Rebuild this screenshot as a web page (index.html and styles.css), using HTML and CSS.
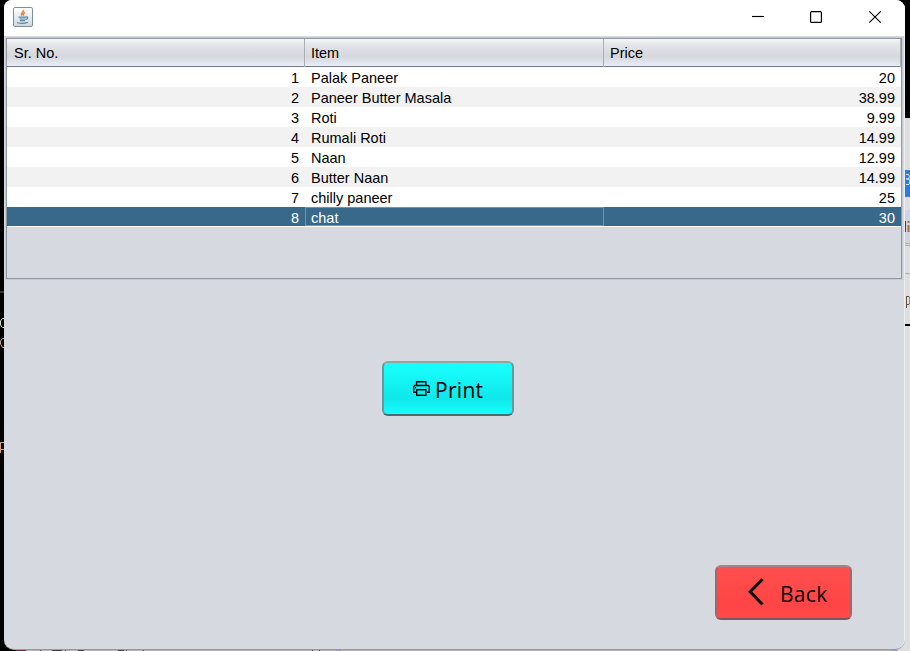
FILE: index.html
```
<!DOCTYPE html>
<html lang="en">
<head>
<meta charset="utf-8">
<title>Menu</title>
<link rel="stylesheet" href="styles.css">
</head>
<body>
<div class="desktop" aria-hidden="true">
  <svg width="910" height="651" viewBox="0 0 910 651">
    <rect width="910" height="651" fill="#000"/>
    <rect x="0" y="291" width="4" height="2" fill="#333"/>
    <g fill="none" stroke-width="1">
      <path d="M4 318.500H2.500L.5 321v4l2 2.500H4" stroke="#cfe3c8"/>
      <path d="M4 338.500H2.500L.5 341v3l2 3.500H4" stroke="#c99a86"/>
      <path d="M.5 442v11M1 442.500h3M1 449.500h3" stroke="#d9a05c"/>
    </g>
    <rect x="890" y="118" width="20" height="533" fill="#dedede"/>
    <rect x="905" y="170" width="5" height="27" fill="#2d7fd6"/>
    <path d="M906 174.500h2.500l1 2-1 2.500H906h3l1 3-1 2.500h-3" fill="none" stroke="#dbe3ec"/>
    <rect x="905" y="210" width="5" height="34" fill="#d0d4dc"/>
    <path d="M905.500 221v11" stroke="#345"/>
    <path d="M908.500 221v2M908.500 225v7" stroke="#a87032" stroke-width="2"/>
    <path d="M905 243.500h5M905 245.500h5M905 273.500h5" stroke="#aaa"/>
    <path d="M906.500 296v12M907 296.500h2l1 1.500v5l-1 1.500h-2" stroke="#6b5240" fill="none"/>
    <rect x="905" y="324" width="5" height="2" fill="#000"/>
    <rect x="14" y="649" width="884" height="2" fill="#b5b5b5"/>
    <rect x="10" y="649" width="6" height="2" fill="#000"/>
    <rect x="16" y="649" width="10" height="2" fill="#7c2644"/>
    <path d="M52 650.500h10M65.500 649v2M40.500 649v2M78 650.500h6M118 650.500h6M126.500 649v2M143.500 649v2M312.500 649v2M319.500 649v2" stroke="#444"/>
    <path d="M336 650h5M892 650h5" stroke="#9999bd" stroke-width="2"/>
  </svg>
</div>

<main class="window">
  <header class="titlebar">
    <svg class="app-icon" width="20" height="20" viewBox="0 0 20 20">
      <defs><linearGradient id="tile" x1="0" y1="0" x2="0" y2="1"><stop offset="0" stop-color="#fff"/><stop offset="1" stop-color="#cfd8df"/></linearGradient></defs>
      <rect x=".5" y=".5" width="19" height="19" rx="1.500" fill="url(#tile)" stroke="#7990a0"/>
      <path d="M10.300 3c1 2-3.300 3-1.500 5.500M12 5.500c-2 1-2.500 1.700-1.200 3.300" fill="none" stroke="#ef8743" stroke-width="1.700"/>
      <path d="M5.500 10.200h7.500M6.500 12h6M7 13.600h5M13 10c2.500-.6 2.200 2-.5 2.500M4 15.500c3 1 8 1 11-.3" fill="none" stroke="#5687a5" stroke-width="1.200"/>
    </svg>
    <svg class="controls" width="132" height="14" viewBox="0 0 132 14" fill="none" stroke="#000" stroke-width="1.150">
      <path d="M0 6.500h12"/>
      <rect x="58.600" y="1.600" width="10.800" height="10.800" rx="1"/>
      <path d="M117.300 1.300l11.400 11.400M128.700 1.300L117.300 12.700"/>
    </svg>
  </header>
  <section class="table">
    <div class="row head"><span>Sr. No.</span><span>Item</span><span>Price</span></div>
    <div class="row"><span class="num">1</span><span>Palak Paneer</span><span class="num">20</span></div>
    <div class="row"><span class="num">2</span><span>Paneer Butter Masala</span><span class="num">38.99</span></div>
    <div class="row"><span class="num">3</span><span>Roti</span><span class="num">9.99</span></div>
    <div class="row"><span class="num">4</span><span>Rumali Roti</span><span class="num">14.99</span></div>
    <div class="row"><span class="num">5</span><span>Naan</span><span class="num">12.99</span></div>
    <div class="row"><span class="num">6</span><span>Butter Naan</span><span class="num">14.99</span></div>
    <div class="row"><span class="num">7</span><span>chilly paneer</span><span class="num">25</span></div>
    <div class="row selected"><span class="num">8</span><span class="focus">chat</span><span class="num">30</span></div>
  </section>
  <div class="actions">
    <button class="btn print">
      <svg width="17" height="15" viewBox="0 0 17 15" fill="none" stroke="#000" stroke-width="1.400">
        <path d="M3.600 4V.7h9.300V4M3 11.300H.7V5.500l1-1h13.600l1 1v5.800H14"/>
        <rect x="3.700" y="8.700" width="9.200" height="5.600"/>
        <path d="M2 6.700h1"/>
      </svg>
      <span>Print</span>
    </button>
    <button class="btn back">
      <svg width="16" height="28" viewBox="0 0 16 28" fill="none" stroke="#000" stroke-width="3"><path d="M14.500 1.200L2.200 13.800l12.300 12.700"/></svg>
      <span>Back</span>
    </button>
  </div>
</main>
</body>
</html>
```
FILE: styles.css
```
* { box-sizing: border-box; }
body {
  margin: 0;
  width: 910px;
  height: 651px;
  overflow: hidden;
  background: #000;
  font-family: "Liberation Sans", Arial, sans-serif;
}
.desktop { position: absolute; inset: 0; }
.desktop svg { display: block; }
.window {
  position: relative;
  display: flex;
  flex-direction: column;
  width: 901px;
  height: 650px;
  margin-left: 4px;
  background: #d6d9e0;
  border-bottom: 1px solid #999;
  border-radius: 8px 9px 10px 10px;
  box-shadow: inset -1px 0 #eceef1;
  overflow: hidden;
}
.titlebar {
  display: flex;
  flex: none;
  justify-content: space-between;
  align-items: flex-start;
  height: 36px;
  padding: 7px 21px 0 9px;
  background: #fff;
}
.controls { margin-top: 3px; }
.table {
  flex: none;
  width: 896px;
  height: 241px;
  margin: 2px 0 0 2px;
  border: 1px solid #9297a1;
  box-shadow: 0 0 0 1px #c6cad2;
}
.row {
  display: grid;
  grid-template-columns: 298px 299px 1fr;
  height: 20px;
  line-height: 22px;
  font-size: 14.500px;
  color: #000;
  background: #fff;
}
.row:nth-child(odd) { background: #f2f2f2; }
.row span { padding: 0 6px; white-space: nowrap; }
.row .num { text-align: right; }
.row.head {
  height: 28px;
  line-height: 28px;
  border-bottom: 1px solid #757983;
  background: linear-gradient(#f4f5f7 0, #e2e3e7 25%, #d6d8dd 65%, #dde0e8 80%, #e8edf7 100%);
}
.row.head span { border-right: 1px solid #a9aeb7; }
.row.head span:first-child { padding-left: 7px; }
.row.selected {
  background: #39698a;
  color: #fff;
  border-bottom: 1px solid #fff;
}
.row.selected .focus {
  height: 19px;
  border: 1px solid #6495bf;
  line-height: 20px;
  padding-left: 5px;
}
.actions {
  display: flex;
  flex: 1;
  align-items: flex-start;
  padding: 82px 0 0 378px;
}
.btn {
  display: flex;
  flex: none;
  align-items: center;
  padding: 0;
  height: 55px;
  border: 2px solid;
  border-radius: 6px;
  color: #000;
  font: 21px "Open Sans", sans-serif;
  letter-spacing: .3px;
}
.btn span { padding-top: 2px; }
.print {
  width: 132px;
  padding: 0 0 0 29px;
  gap: 5px;
  border-color: #8fa5a9 #6f9499 #4a6c72;
  background: linear-gradient(#19ffff, #0fe8ea 70%, #18ffff);
}
.back {
  width: 137px;
  padding: 0 0 0 31px;
  gap: 16px;
  margin: 204px 0 0 201px;
  border-color: #a88488 #a0686c #84545a;
  background: linear-gradient(#ff4f4f, #ff4545 70%, #ff4949);
}
.back svg { margin-top: -2px; }
```
